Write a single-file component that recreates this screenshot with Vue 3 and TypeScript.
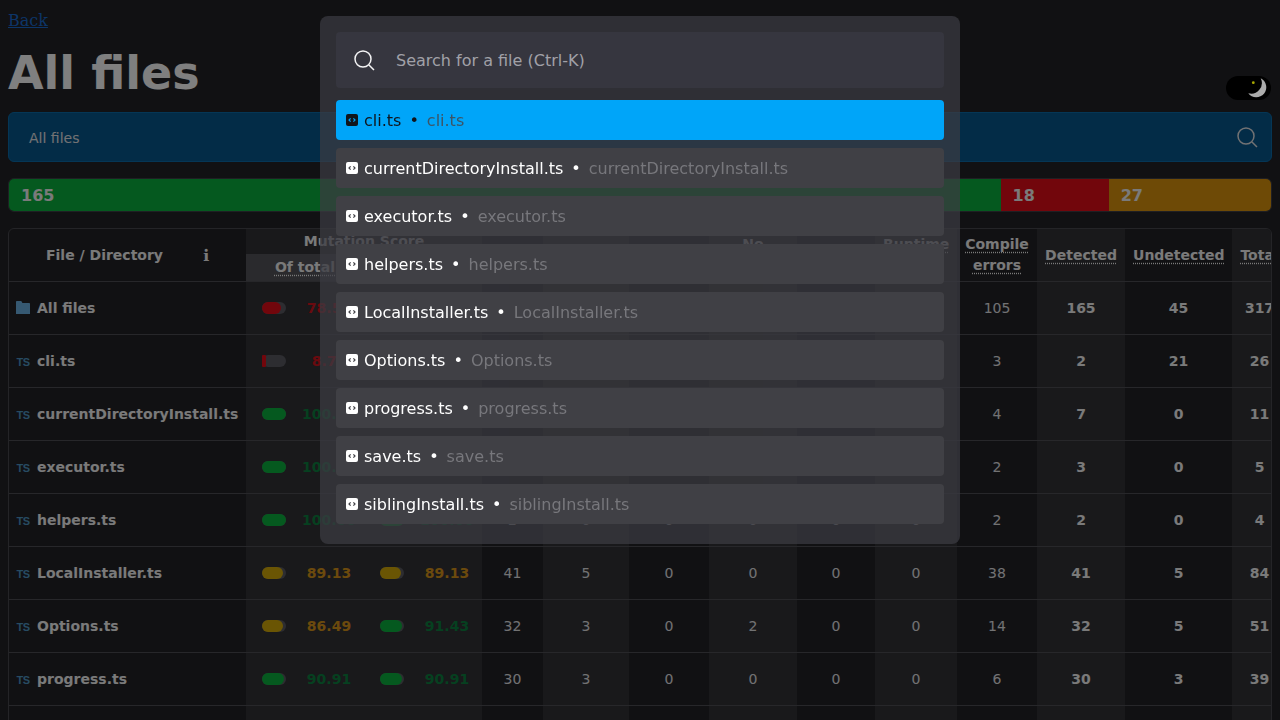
<template>
  <div class="page">
    <a class="back" href="#">Back</a>
    <div class="title-row">
      <h1>All files</h1>
      <div class="theme-toggle">
        <svg width="24" height="24" viewBox="0 0 24 24">
          <path d="M13.7 2.3A10 10 0 1 1 1.3 17.3A10.7 10.7 0 0 0 13.7 2.3Z" fill="#acacac" />
          <circle cx="6.3" cy="6.7" r="1.4" fill="#a8a800" />
        </svg>
      </div>
    </div>

    <div class="breadcrumb">
      <span class="crumb">All files</span>
      <svg class="search-icon" width="24" height="24" viewBox="0 0 24 24" fill="none" stroke="currentColor" stroke-width="1.5">
        <circle cx="11" cy="11" r="8" />
        <path d="M17 17l5 5" />
      </svg>
    </div>

    <div class="totals">
      <div class="seg seg-green" :style="{ width: (165 / 210) * 100 + '%' }">165</div>
      <div class="seg seg-red" :style="{ width: (18 / 210) * 100 + '%' }">18</div>
      <div class="seg seg-amber" :style="{ width: (27 / 210) * 100 + '%' }">27</div>
    </div>

    <div class="table-wrap">
      <table>
        <colgroup>
          <col v-for="(w, i) in colWidths" :key="i" :style="{ width: w + 'px' }" />
        </colgroup>
        <thead>
          <tr class="head-top">
            <th rowspan="2" class="file-head">
              <div class="file-head-inner"><span>File / Directory</span><span class="info">ℹ</span></div>
            </th>
            <th colspan="2" class="alt">Mutation Score</th>
            <th rowspan="2"><span class="dotted">Killed</span></th>
            <th rowspan="2" class="alt"><span class="dotted">Survived</span></th>
            <th rowspan="2"><span class="dotted">Timeout</span></th>
            <th rowspan="2" class="alt"><span class="dotted">No coverage</span></th>
            <th rowspan="2"><span class="dotted">Ignored</span></th>
            <th rowspan="2" class="alt"><span class="dotted">Runtime errors</span></th>
            <th rowspan="2"><span class="dotted">Compile errors</span></th>
            <th rowspan="2" class="alt"><span class="dotted">Detected</span></th>
            <th rowspan="2"><span class="dotted">Undetected</span></th>
            <th rowspan="2" class="alt"><span class="dotted">Total</span></th>
          </tr>
          <tr class="head-sub">
            <th class="sub"><span class="dotted">Of total</span></th>
            <th class="sub"><span class="dotted">Of covered</span></th>
          </tr>
        </thead>
        <tbody>
          <tr v-for="row in rows" :key="row.name">
            <td class="file-cell">
              <div class="file-inner">
                <svg v-if="row.folder" class="folder" width="14" height="13" viewBox="0 0 14 13">
                  <path d="M0 1C0 .4.4 0 1 0h3.8c.4 0 .7.2.9.5L6.4 2H13c.6 0 1 .4 1 1v10H0Z" fill="currentColor" />
                </svg>
                <span v-else class="ts">TS</span>
                <span class="file-name">{{ row.name }}</span>
              </div>
            </td>
            <td v-for="(score, i) in [row.total, row.covered]" :key="i" class="alt">
              <div class="score">
                <span class="pill">
                  <span class="pill-fill" :class="[level(score), { thin: score < 10 }]" :style="{ width: score + '%' }"></span>
                </span>
                <span class="score-text" :class="level(score) + '-text'">{{ score.toFixed(2) }}</span>
              </div>
            </td>
            <td>{{ row.killed }}</td>
            <td class="alt">{{ row.survived }}</td>
            <td>{{ row.timeout }}</td>
            <td class="alt">{{ row.noCoverage }}</td>
            <td>{{ row.ignored }}</td>
            <td class="alt">{{ row.runtime }}</td>
            <td>{{ row.compile }}</td>
            <td class="alt strong">{{ row.killed + row.timeout }}</td>
            <td class="strong">{{ row.survived + row.noCoverage }}</td>
            <td class="alt strong">{{ row.sum }}</td>
          </tr>
        </tbody>
      </table>
    </div>
  </div>

  <div class="overlay">
    <div class="modal">
      <div class="search-box">
        <svg width="24" height="24" viewBox="0 0 24 24" fill="none" stroke="currentColor" stroke-width="1.5">
          <circle cx="11" cy="11" r="8" />
          <path d="M17 17l5 5" />
        </svg>
        <input type="text" placeholder="Search for a file (Ctrl-K)" />
      </div>
      <div class="results">
        <div v-for="(file, i) in files" :key="file" class="result" :class="{ active: i === 0 }">
          <svg class="file-icon" width="12" height="12" viewBox="0 0 12 12">
            <rect width="12" height="12" rx="2" fill="currentColor" />
            <path class="chevrons" d="M4.6 4.4L3 6l1.6 1.6M7.4 4.4L9 6 7.4 7.6" fill="none" stroke-width="1.2" />
          </svg>
          <span>{{ file }}</span>
          <span class="bullet">•</span>
          <span class="path">{{ file }}</span>
        </div>
      </div>
    </div>
  </div>
</template>

<script setup lang="ts">
interface FileRow {
  name: string;
  folder?: boolean;
  total: number;
  covered: number;
  killed: number;
  survived: number;
  timeout: number;
  noCoverage: number;
  ignored: number;
  runtime: number;
  compile: number;
  sum: number;
}

const colWidths = [237, 118, 118, 61, 86, 80, 88, 78, 82, 80, 88, 107, 55];

const rows: FileRow[] = [
  { name: 'All files', folder: true, total: 78.57, covered: 79.33, killed: 165, survived: 43, timeout: 0, noCoverage: 2, ignored: 0, runtime: 2, compile: 105, sum: 317 },
  { name: 'cli.ts', total: 8.7, covered: 8.7, killed: 2, survived: 21, timeout: 0, noCoverage: 0, ignored: 0, runtime: 0, compile: 3, sum: 26 },
  { name: 'currentDirectoryInstall.ts', total: 100, covered: 100, killed: 7, survived: 0, timeout: 0, noCoverage: 0, ignored: 0, runtime: 0, compile: 4, sum: 11 },
  { name: 'executor.ts', total: 100, covered: 100, killed: 3, survived: 0, timeout: 0, noCoverage: 0, ignored: 0, runtime: 0, compile: 2, sum: 5 },
  { name: 'helpers.ts', total: 100, covered: 100, killed: 2, survived: 0, timeout: 0, noCoverage: 0, ignored: 0, runtime: 0, compile: 2, sum: 4 },
  { name: 'LocalInstaller.ts', total: 89.13, covered: 89.13, killed: 41, survived: 5, timeout: 0, noCoverage: 0, ignored: 0, runtime: 0, compile: 38, sum: 84 },
  { name: 'Options.ts', total: 86.49, covered: 91.43, killed: 32, survived: 3, timeout: 0, noCoverage: 2, ignored: 0, runtime: 0, compile: 14, sum: 51 },
  { name: 'progress.ts', total: 90.91, covered: 90.91, killed: 30, survived: 3, timeout: 0, noCoverage: 0, ignored: 0, runtime: 0, compile: 6, sum: 39 },
  { name: 'save.ts', total: 100, covered: 100, killed: 10, survived: 0, timeout: 0, noCoverage: 0, ignored: 0, runtime: 0, compile: 4, sum: 14 },
  { name: 'siblingInstall.ts', total: 100, covered: 100, killed: 5, survived: 0, timeout: 0, noCoverage: 0, ignored: 0, runtime: 0, compile: 3, sum: 8 },
];

const files = [
  'cli.ts',
  'currentDirectoryInstall.ts',
  'executor.ts',
  'helpers.ts',
  'LocalInstaller.ts',
  'Options.ts',
  'progress.ts',
  'save.ts',
  'siblingInstall.ts',
];

const level = (score: number) => {
  if (score >= 90) return 'good';
  if (score >= 80) return 'warn';
  return 'bad';
};
</script>

<style>
html,
body {
  margin: 0;
  height: 100%;
  overflow: hidden;
  background: #222226;
}
</style>

<style scoped>
.page {
  padding: 11px 8px 8px;
  font-family: 'DejaVu Sans', sans-serif;
  color: #f4f4f5;
}

.back {
  display: block;
  width: fit-content;
  font-family: 'DejaVu Serif', serif;
  font-size: 16px;
  line-height: 19px;
  color: #1a6ad0;
}

.title-row {
  display: flex;
  justify-content: space-between;
  align-items: flex-end;
  margin: 14px 0 10px;
}

h1 {
  margin: 0;
  font-size: 46px;
  line-height: 58px;
  font-weight: 700;
  color: #ffffff;
}

/* sits above the dimming overlay, it is brighter than the rest of the page */
.theme-toggle {
  position: relative;
  z-index: 1;
  display: flex;
  justify-content: flex-end;
  width: 45px;
  height: 24px;
  margin-right: 1px;
  margin-bottom: 2px;
  border-radius: 12px;
  background: #000000;
}

.breadcrumb {
  display: flex;
  justify-content: space-between;
  align-items: center;
  height: 50px;
  box-sizing: border-box;
  padding: 0 12px 0 20px;
  border: 1px solid #0a6cab;
  border-radius: 6px;
  background: #07598f;
  font-size: 14px;
  color: #e4e4e7;
}

.crumb {
  padding-top: 2px;
}

.search-icon {
  color: #e4e4e7;
}

.totals {
  display: flex;
  height: 34px;
  margin-top: 16px;
  overflow: hidden;
  box-sizing: border-box;
  border: 1px solid #3f3f46;
  border-radius: 6px;
  font-size: 16px;
  font-weight: 700;
  color: #f4f4f5;
}

.seg {
  box-sizing: border-box;
  display: flex;
  align-items: center;
  padding-left: 12px;
}

.seg-green {
  background: #0ab33e;
}

.seg-red {
  background: #e40c18;
}

.seg-amber {
  background: #dc940c;
}

.table-wrap {
  margin-top: 16px;
  overflow: hidden;
  border: 1px solid #48484e;
  border-radius: 6px;
}

table {
  table-layout: fixed;
  width: 1278px;
  border-collapse: separate;
  border-spacing: 0;
  font-size: 14px;
}

th {
  padding: 0 8px;
  font-weight: 700;
  line-height: 21px;
  text-align: center;
  border-bottom: 1px solid #4e4e54;
}

.head-top th[colspan] {
  height: 25px;
  border-bottom: 0;
}

.head-top th {
  height: 25px;
}

.head-sub th {
  height: 27px;
}

.sub {
  background: #55555b;
}

.alt {
  background: #323236;
}

.dotted {
  text-decoration: underline dotted;
  text-underline-offset: 3px;
}

.file-head {
  padding: 0;
}

.file-head-inner {
  display: flex;
  align-items: center;
  padding-left: 37px;
  gap: 40px;
}

.info {
  font-size: 16px;
  color: #f4f4f5;
}

td {
  height: 52px;
  padding: 0;
  text-align: center;
  color: #e4e4e7;
  border-bottom: 1px solid #4e4e54;
}

.strong {
  font-weight: 700;
  color: #f4f4f5;
}

.file-inner {
  display: flex;
  align-items: center;
  padding-left: 7px;
}

.file-name {
  font-weight: 700;
  color: #f4f4f5;
}

.folder {
  width: 14px;
  margin-right: 7px;
  margin-top: -2px;
  color: #6cb2e4;
}

.ts {
  width: 14px;
  margin-right: 7px;
  margin-top: 2px;
  font-family: 'Liberation Sans', sans-serif;
  font-size: 11px;
  font-weight: 700;
  letter-spacing: -0.5px;
  text-align: center;
  color: #4f96c4;
}

.score {
  display: flex;
  align-items: center;
  padding-left: 16px;
}

.pill {
  display: block;
  flex: none;
  width: 24px;
  height: 12px;
  border-radius: 6px;
  background: #5a5a62;
}

.pill-fill {
  display: block;
  height: 100%;
  border-radius: 6px;
}

.pill-fill.thin {
  min-width: 4px;
  border-radius: 1px;
}

.good {
  background: #0ab33e;
}

.warn {
  background: #d4aa08;
}

.bad {
  background: #e40c18;
}

.score-text {
  flex: 1;
  margin-left: 8px;
  text-align: center;
  font-weight: 700;
}

.good-text {
  color: #0c8040;
}

.warn-text {
  color: #d8941a;
}

.bad-text {
  color: #d4141e;
}

.overlay {
  position: fixed;
  inset: 0;
  display: flex;
  justify-content: center;
  align-items: flex-start;
  background: rgba(0, 0, 0, 0.5);
  font-family: 'DejaVu Sans', sans-serif;
}

.modal {
  width: 640px;
  margin-top: 16px;
  box-sizing: border-box;
  padding: 16px 16px 20px;
  border-radius: 8px;
  background: rgba(60, 60, 66, 0.72);
}

.search-box {
  display: flex;
  align-items: center;
  gap: 20px;
  height: 56px;
  padding-left: 16px;
  border-radius: 4px;
  background: #36363f;
  color: #f4f4f5;
}

.search-box input {
  flex: 1;
  border: 0;
  outline: 0;
  padding: 0;
  background: transparent;
  font-family: inherit;
  font-size: 16px;
  color: #f4f4f5;
}

.search-box input::placeholder {
  color: #a1a1a8;
  opacity: 1;
}

.results {
  display: flex;
  flex-direction: column;
  gap: 8px;
  margin-top: 12px;
}

.result {
  display: flex;
  align-items: center;
  height: 40px;
  padding-left: 10px;
  border-radius: 4px;
  background: #404045;
  font-size: 16px;
  color: #ffffff;
}

.result .chevrons {
  stroke: #404045;
}

.result.active {
  background: #00a5f9;
  color: #10151c;
}

.result.active .chevrons {
  stroke: #00a5f9;
}

.file-icon {
  margin-right: 6px;
}

.bullet {
  margin: 0 8px;
}

.path {
  color: #77777c;
}

.result.active .path {
  color: #3c5566;
}
</style>
